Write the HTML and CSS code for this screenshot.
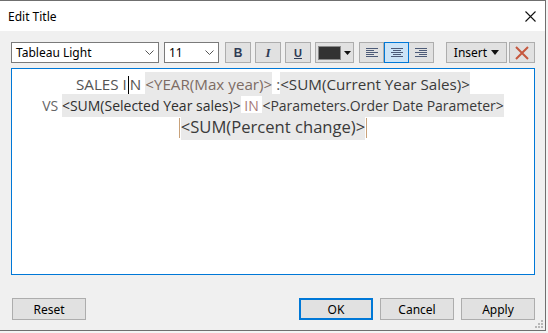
FILE: index.html
```html
<!DOCTYPE html>
<html lang="en">
<head>
    <meta charset="UTF-8">
    <title>Edit Title</title>
    <link rel="stylesheet" href="styles.css">
</head>
<body>
    <div class="dialog">
        <div class="titlebar">
            <span class="title">Edit Title</span>
            <svg class="close" width="11" height="11" viewBox="0 0 11 11">
                <path d="M0.5 0.5 L10.5 10.5 M10.5 0.5 L0.5 10.5" stroke="#111" stroke-width="1.1"/>
            </svg>
        </div>

        <div class="content">
            <div class="toolbar">
                <div class="select font-select">
                    <span>Tableau Light</span>
                    <svg width="9" height="5" viewBox="0 0 9 5"><path d="M0.5 0.5 L4.5 4.5 L8.5 0.5" fill="none" stroke="#555"/></svg>
                </div>
                <div class="select size-select">
                    <span>11</span>
                    <svg width="9" height="5" viewBox="0 0 9 5"><path d="M0.5 0.5 L4.5 4.5 L8.5 0.5" fill="none" stroke="#555"/></svg>
                </div>
                <div class="tool bold">B</div>
                <div class="tool italic">I</div>
                <div class="tool underline">U</div>
                <div class="tool color-tool">
                    <span class="swatch"></span>
                    <svg width="7" height="4" viewBox="0 0 7 4"><path d="M0 0 L7 0 L3.5 4 Z" fill="#111"/></svg>
                </div>
                <div class="align-group">
                    <div class="tool align">
                        <svg width="12" height="9" viewBox="0 0 12 9"><path d="M0 0.5 H12 M0 2.5 H8 M0 4.5 H12 M0 6.5 H8 M0 8.5 H12" stroke="#4d5b78"/></svg>
                    </div>
                    <div class="tool align active">
                        <svg width="12" height="9" viewBox="0 0 12 9"><path d="M0 0.5 H12 M2 2.5 H10 M0 4.5 H12 M2 6.5 H10 M0 8.5 H12" stroke="#4d5b78"/></svg>
                    </div>
                    <div class="tool align">
                        <svg width="12" height="9" viewBox="0 0 12 9"><path d="M0 0.5 H12 M4 2.5 H12 M0 4.5 H12 M4 6.5 H12 M0 8.5 H12" stroke="#4d5b78"/></svg>
                    </div>
                </div>
                <div class="tool insert">
                    <span>Insert</span>
                    <svg width="8" height="5" viewBox="0 0 8 5"><path d="M0 0 L8 0 L4 5 Z" fill="#111"/></svg>
                </div>
                <div class="tool clear">
                    <svg width="14" height="14" viewBox="0 0 14 14"><path d="M1 1 L13 13 M13 1 L1 13" stroke="#c6583f" stroke-width="2"/></svg>
                </div>
            </div>

            <div class="editor">
                <p class="line line-1">SALES I<span class="caret"></span>N <span class="field field-year">&lt;YEAR(Max year)&gt;</span> :<span class="field">&lt;SUM(Current Year Sales)&gt;</span></p>
                <p class="line line-2"><span class="plain">VS</span> <span class="field field-strong">&lt;SUM(Selected Year sales)&gt;</span> <span class="keyword">IN</span> <span class="field">&lt;Parameters.Order Date Parameter&gt;</span></p>
                <p class="line line-3"><span class="mark"></span><span class="field">&lt;SUM(Percent change)&gt;</span><span class="mark"></span></p>
            </div>

            <div class="footer">
                <button class="btn">Reset</button>
                <div class="footer-right">
                    <button class="btn btn-default">OK</button>
                    <button class="btn">Cancel</button>
                    <button class="btn">Apply</button>
                </div>
            </div>
        </div>

        <svg class="grip" width="8" height="8" viewBox="0 0 8 8">
            <rect x="6" y="0" width="2" height="2" fill="#b8b8b8"/>
            <rect x="3" y="3" width="2" height="2" fill="#b8b8b8"/>
            <rect x="6" y="3" width="2" height="2" fill="#b8b8b8"/>
            <rect x="0" y="6" width="2" height="2" fill="#b8b8b8"/>
            <rect x="3" y="6" width="2" height="2" fill="#b8b8b8"/>
            <rect x="6" y="6" width="2" height="2" fill="#b8b8b8"/>
        </svg>
    </div>
</body>
</html>
```

FILE: styles.css
```css
body {
    margin: 0;
    background: #f4f4f4;
    font-family: 'Noto Sans', 'Open Sans', sans-serif;
    color: #000;
}
.dialog {
    position: relative;
    width: 546px;
    height: 331px;
    box-sizing: border-box;
    border: 1px solid #6f6f6f;
    border-left: none;
    background: #f0f0f0;
}
.titlebar {
    height: 30px;
    background: #fff;
    display: flex;
    align-items: center;
    justify-content: space-between;
    padding: 0 9px 0 8px;
}
.title {
    font-size: 12px;
}
.content {
    padding: 11px 10px 0 11px;
}
.toolbar {
    display: flex;
    height: 21px;
}
.select {
    box-sizing: border-box;
    display: flex;
    align-items: center;
    justify-content: space-between;
    background: #fff;
    border: 1px solid #7a7a7a;
    padding: 0 4px 0 4px;
    font-size: 12px;
}
.font-select {
    width: 148px;
}
.size-select {
    width: 55px;
    margin-left: 5px;
}
.tool {
    box-sizing: border-box;
    width: 26px;
    display: flex;
    align-items: center;
    justify-content: center;
    background: #e1e1e1;
    border: 1px solid #adadad;
    color: #2f3b55;
}
.bold {
    margin-left: 6px;
    font-family: 'Liberation Sans', sans-serif;
    font-weight: bold;
    font-size: 12px;
}
.italic {
    margin-left: 4px;
    font-family: 'Liberation Serif', serif;
    font-style: italic;
    font-weight: bold;
    font-size: 13px;
}
.underline {
    margin-left: 4px;
    font-family: 'Liberation Sans', sans-serif;
    font-weight: bold;
    font-size: 11px;
    text-decoration: underline;
}
.color-tool {
    width: 39px;
    margin-left: 4px;
    justify-content: flex-start;
    gap: 3px;
    padding-left: 2px;
}
.swatch {
    width: 23px;
    height: 14px;
    box-sizing: border-box;
    background: #333;
    border: 1px solid #8a8a8a;
}
.align-group {
    display: flex;
    margin-left: 5px;
}
.align {
    width: 25px;
}
.align + .align {
    border-left: none;
}
.align.active {
    background: #cce4f7;
    border: 1px solid #0078d7;
}
.insert {
    width: 61px;
    margin-left: 12px;
    gap: 4px;
    font-size: 12px;
    color: #000;
}
.clear {
    margin-left: 2px;
}
.editor {
    box-sizing: border-box;
    height: 207px;
    margin-top: 5px;
    background: #fff;
    border: 1px solid #0078d7;
    padding-top: 5px;
    font-family: 'Open Sans', sans-serif;
    text-align: center;
}
.line {
    margin: 0;
    white-space: nowrap;
}
.line-1 {
    font-size: 15.2px;
    line-height: 21px;
    color: #555;
}
.line-2 {
    font-size: 14px;
    line-height: 21px;
    color: #555;
}
.line-3 {
    font-size: 16.6px;
    line-height: 21px;
    color: #444;
}
.field {
    background: #e9e9e9;
    color: #3a3a3a;
    padding: 2px 0;
}
.field-year {
    color: #7d6c64;
}
.field-strong {
    color: #2e2e2e;
}
.keyword {
    color: #a77a78;
}
.plain {
    color: #666;
}
.caret {
    display: inline-block;
    width: 1px;
    height: 18px;
    margin: 0 1px;
    background: #000;
    vertical-align: -4px;
}
.mark {
    display: inline-block;
    width: 1px;
    height: 20px;
    margin: 0 1px;
    background: #c9a27a;
    vertical-align: -5px;
}
.footer {
    display: flex;
    justify-content: space-between;
    margin-top: 23px;
}
.footer-right {
    display: flex;
    gap: 7px;
}
.btn {
    box-sizing: border-box;
    width: 74px;
    height: 22px;
    padding: 0;
    background: #e1e1e1;
    border: 1px solid #adadad;
    font-family: 'Noto Sans', 'Open Sans', sans-serif;
    font-size: 12px;
    color: #000;
}
.footer > .btn {
    margin-left: 1px;
}
.btn-default {
    border: 2px solid #0078d7;
}
.grip {
    position: absolute;
    right: 2px;
    bottom: 2px;
}
```
